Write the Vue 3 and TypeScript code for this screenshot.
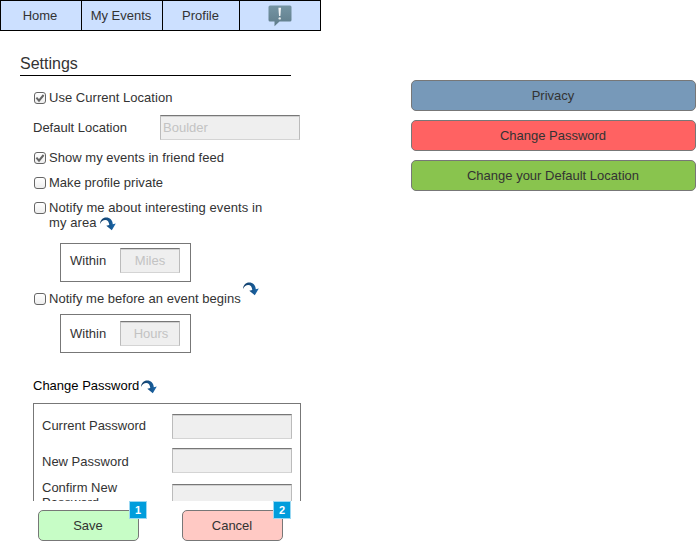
<script setup lang="ts">
import { ref } from 'vue'

interface Option { label: string; on: boolean }

const tabs: string[] = ['Home', 'My Events', 'Profile']
const links = [
  { label: 'Privacy', tone: 'blue' },
  { label: 'Change Password', tone: 'red' },
  { label: 'Change your Default Location', tone: 'green' },
]
const actions = [
  { label: 'Save', tone: 'save', note: 1 },
  { label: 'Cancel', tone: 'cancel', note: 2 },
]
const passwordFields: string[] = ['Current Password', 'New Password', 'Confirm New Password']
const currentLocation = ref<Option>({ label: 'Use Current Location', on: true })
const visibility = ref<Option[]>([
  { label: 'Show my events in friend feed', on: true },
  { label: 'Make profile private', on: false },
])
const nearby = ref(false)
const upcoming = ref(false)
</script>

<template>
  <svg class="defs" width="0" height="0" aria-hidden="true">
    <defs>
      <linearGradient id="arrowFill" x1="0" y1="0" x2="1" y2="0">
        <stop offset="0" stop-color="#123a62" />
        <stop offset="1" stop-color="#1a69ad" />
      </linearGradient>
      <linearGradient id="bubbleFill" x1="0" y1="0" x2="0" y2="1">
        <stop offset="0" stop-color="#7595a4" />
        <stop offset="1" stop-color="#5f7c8a" />
      </linearGradient>
      <symbol id="arrow" viewBox="0 0 16 14">
        <path d="M0 7 C.3 3.2 2.8 .6 6.2 .6 C10 .6 12.4 3 12.8 7.2 L15.8 6.6 L11.8 13.3 L6.3 8.8 L9.3 8.1 C9 5 7.6 3.1 5.2 3.1 C3 3.1 1.2 4.6 0 7Z" fill="url(#arrowFill)" />
      </symbol>
    </defs>
  </svg>
  <div class="page">
    <main class="phone">
      <nav class="tabs">
        <a v-for="t in tabs" :key="t" class="tab">{{ t }}</a>
        <a class="tab" aria-label="Notifications">
          <svg class="bubble" width="24" height="22" viewBox="0 0 24 22">
            <path d="M2 .5H22Q23.5 .5 23.5 2V15Q23.5 16.5 22 16.5H11.5L6.5 21.3V16.5H2Q.5 16.5 .5 15V2Q.5 .5 2 .5Z" fill="url(#bubbleFill)" />
            <path d="M10.4 2.8H13L12.4 11H11Z" fill="#f1f4f5" />
            <circle cx="11.7" cy="13.4" r="1.2" fill="#e4eaec" />
          </svg>
        </a>
      </nav>

      <h1 class="title">Settings</h1>

      <section class="form">
        <label class="check">
          <input v-model="currentLocation.on" type="checkbox"><span class="tick"><svg v-if="currentLocation.on" width="10" height="10" viewBox="0 0 10 10"><path d="M1.4 4.6L4 7.6L8.6 2" /></svg></span>{{ currentLocation.label }}
        </label>
        <div class="location">
          <span>Default Location</span>
          <input class="field" type="text" placeholder="Boulder" disabled>
        </div>
        <label v-for="o in visibility" :key="o.label" class="check">
          <input v-model="o.on" type="checkbox"><span class="tick"><svg v-if="o.on" width="10" height="10" viewBox="0 0 10 10"><path d="M1.4 4.6L4 7.6L8.6 2" /></svg></span>{{ o.label }}
        </label>
        <label class="check nearby">
          <input v-model="nearby" type="checkbox"><span class="tick" />
          <span>Notify me about interesting events in my area <svg class="arrow" width="16" height="14"><use href="#arrow" /></svg></span>
        </label>
        <div class="range miles">
          <span>Within</span><input class="field" type="text" placeholder="Miles" disabled>
        </div>
        <label class="check upcoming">
          <input v-model="upcoming" type="checkbox"><span class="tick" />Notify me before an event begins
          <svg class="arrow" width="16" height="14"><use href="#arrow" /></svg>
        </label>
        <div class="range hours">
          <span>Within</span><input class="field" type="text" placeholder="Hours" disabled>
        </div>
        <h2 class="subtitle">Change Password <svg class="arrow" width="16" height="14"><use href="#arrow" /></svg></h2>
        <div class="passwords">
          <label v-for="f in passwordFields" :key="f" class="password">
            <span>{{ f }}</span><input class="field" type="password">
          </label>
        </div>
      </section>

      <footer class="actions">
        <button v-for="a in actions" :key="a.label" class="button" :class="a.tone">
          {{ a.label }}<span class="note">{{ a.note }}</span>
        </button>
      </footer>
    </main>

    <aside class="links">
      <button v-for="l in links" :key="l.label" class="button" :class="l.tone">{{ l.label }}</button>
    </aside>
  </div>
</template>

<style>
body { margin: 0; background: #fff; overflow: hidden; }
</style>

<style scoped>
* { box-sizing: border-box; }
.defs { position: absolute; }
.page {
  display: flex;
  width: 696px;
  height: 541px;
  font: 13px/15px "Liberation Sans", Arial, sans-serif;
  color: #333;
}
.phone { display: flex; flex-direction: column; width: 321px; height: 541px; }
.tabs {
  display: grid;
  grid-template-columns: 80px 80px 76px 80px;
  gap: 1px;
  height: 31px;
  padding: 1px;
  background: #000;
}
.tab { display: flex; align-items: center; justify-content: center; padding-right: 2px; background: #cce0ff; }
.tab:nth-child(3) { padding-right: 1px; }
.bubble { margin: 0 0 0 1px; }
.title {
  width: 271px;
  height: 25px;
  margin: 20px 0 0 20px;
  padding-top: 3px;
  border-bottom: 1px solid #000;
  font-size: 16px;
  font-weight: normal;
  line-height: 20px;
}
.form { height: 425px; padding: 14px 20px 0 33px; overflow: hidden; }
.check { display: flex; align-items: flex-start; height: 15px; margin-bottom: 10px; padding-left: 1px; white-space: nowrap; letter-spacing: .03px; }
.check input { position: absolute; opacity: 0; }
.tick {
  flex: none;
  width: 12px;
  height: 12px;
  margin: 2px 3px 0 0;
  border: 1px solid #666;
  border-radius: 3px;
  background: linear-gradient(#fff, #eee);
}
.tick svg { display: block; }
.tick path { fill: none; stroke: #666; stroke-width: 2; }
.arrow { display: inline-block; flex: none; vertical-align: top; }
.location { display: flex; align-items: center; height: 25px; margin-bottom: 10px; }
.location span { width: 127px; }
.field {
  width: 120px;
  height: 25px;
  margin: 0;
  padding: 0 2px;
  border: 1px solid #bbb;
  border-top-color: #777;
  border-bottom-color: #d4d4d4;
  border-radius: 0;
  outline: none;
  background: #efefef;
  box-shadow: inset 0 1px #d0d0d0;
  font: inherit;
}
.field::placeholder { color: #c3c3c3; opacity: 1; }
.location .field { width: 140px; }
.nearby { height: 30px; margin-bottom: 13px; white-space: normal; }
.nearby > span:last-child { width: 226px; letter-spacing: .08px; }
.nearby .arrow { margin-top: 2px; }
.range { display: flex; width: 131px; height: 39px; margin-left: 27px; padding: 4px 10px 0 9px; border: 1px solid #777; }
.range span { width: 50px; padding-top: 5px; }
.range .field { width: 60px; text-align: center; }
.miles { margin-bottom: 9px; }
.hours { padding-top: 6px; }
.hours .field { padding-left: 4px; }
.upcoming { margin-bottom: 8px; }
.upcoming .arrow { margin: -9px 0 0 2px; }
.subtitle { display: flex; gap: 2px; height: 15px; margin: 25px 0 10px; color: #000; font-size: 13px; font-weight: normal; }
.subtitle .arrow { margin-top: 2px; }
.passwords { display: flex; flex-direction: column; width: 268px; height: 130px; padding: 10px 8px; border: 1px solid #777; }
.password { display: flex; flex: none; height: 35px; }
.password span { width: 130px; padding: 4px 20px 0 0; }
.password:nth-child(2) span { padding-top: 5px; }
.password:nth-child(2) .field { margin-top: -1px; }
.password:nth-child(3) span { padding-top: 0; margin-top: -4px; }
.actions { display: flex; gap: 43px; padding: 9px 0 0 38px; }
.button {
  position: relative;
  height: 31px;
  padding: 0 1px 0 0;
  border: 1px solid #777;
  border-radius: 5px;
  color: #333;
  font: inherit;
}
.actions .button { width: 101px; }
.save { background: #c7fdc6; }
.cancel { background: #ffc9c4; }
.note {
  position: absolute;
  top: -10px;
  right: -9px;
  width: 18px;
  height: 18px;
  border: 1px solid #9ad8f2;
  background: #009ddc;
  color: #fff;
  font-size: 11px;
  font-weight: bold;
  line-height: 17px;
  text-align: center;
}
.links { display: flex; flex-direction: column; gap: 9px; width: 285px; margin: 80px 0 0 90px; }
.blue { background: #7799b9; }
.red { background: #ff6262; }
.green { background: #89c44e; }
</style>
